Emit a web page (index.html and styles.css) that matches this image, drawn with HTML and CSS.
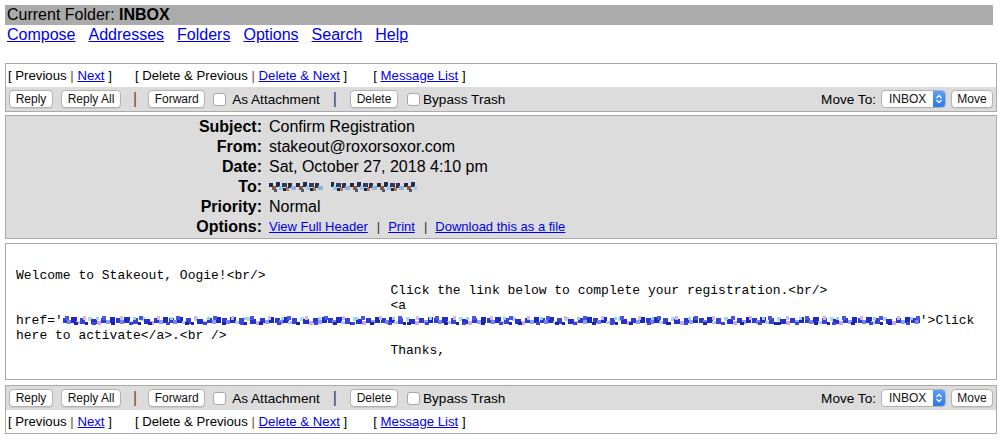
FILE: index.html
```html
<!DOCTYPE html>
<html>
<head>
<meta charset="utf-8">
<title>INBOX</title>
<link rel="stylesheet" href="styles.css">
</head>
<body>
<div class="page">
  <div class="folder-bar">Current Folder: <b>INBOX</b></div>
  <nav class="main-nav">
    <a href="#">Compose</a>
    <a href="#">Addresses</a>
    <a href="#">Folders</a>
    <a href="#">Options</a>
    <a href="#">Search</a>
    <a href="#">Help</a>
  </nav>

  <div class="box nav-box top-box">
    <div class="nav-row">
      <span class="grp">[ Previous <span class="pipe">|</span> <a href="#">Next</a> ]</span>
      <span class="grp grp-del">[ Delete &amp; Previous <span class="pipe">|</span> <a href="#">Delete &amp; Next</a> ]</span>
      <span class="grp grp-list">[ <a href="#">Message List</a> ]</span>
    </div>
    <div class="tool-row">
      <div class="tools-left">
        <button class="btn btn-reply">Reply</button>
        <button class="btn btn-replyall">Reply All</button>
        <span class="sep sep-a">|</span>
        <button class="btn btn-forward">Forward</button>
        <input type="checkbox" class="chk chk-attach">
        <span class="lbl">As Attachment</span>
        <span class="sep sep-b">|</span>
        <button class="btn btn-delete">Delete</button>
        <input type="checkbox" class="chk chk-bypass">
        <span class="lbl">Bypass Trash</span>
      </div>
      <div class="tools-right">
        <span class="lbl">Move To:</span>
        <span class="select"><span class="select-text">INBOX</span><span class="select-chip"><svg width="8" height="10" viewBox="0 0 8 10"><path d="M1.5 4 L4 1.5 L6.5 4 M1.5 6 L4 8.5 L6.5 6" fill="none" stroke="#fff" stroke-width="1.3"/></svg></span></span>
        <button class="btn btn-move">Move</button>
      </div>
    </div>
  </div>

  <div class="box header-box">
    <div class="hdr-label">Subject:</div><div class="hdr-value">Confirm Registration</div>
    <div class="hdr-label">From:</div><div class="hdr-value">stakeout@roxorsoxor.com</div>
    <div class="hdr-label">Date:</div><div class="hdr-value">Sat, October 27, 2018 4:10 pm</div>
    <div class="hdr-label">To:</div><div class="hdr-value"><svg class="redact-to" width="148" height="14" viewBox="0 0 148 14">
      <defs>
        <pattern id="pto" width="27" height="14" patternUnits="userSpaceOnUse">
          <rect x="0" y="3" width="4" height="4" fill="#2a2040"/>
          <rect x="3" y="6" width="4" height="4" fill="#8a5a40"/>
          <rect x="7" y="2" width="4" height="5" fill="#1e2d55"/>
          <rect x="10" y="6" width="4" height="4" fill="#9cc4e4"/>
          <rect x="13" y="3" width="5" height="4" fill="#2b3a66"/>
          <rect x="17" y="7" width="3" height="4" fill="#b07a50"/>
          <rect x="19" y="3" width="4" height="5" fill="#3a2a4a"/>
          <rect x="22" y="6" width="5" height="4" fill="#8ab4d8"/>
          <rect x="5" y="9" width="3" height="3" fill="#4a5a7a"/>
          <rect x="14" y="8" width="3" height="3" fill="#1a2448"/>
        </pattern>
      </defs>
      <rect x="0" y="0" width="54" height="14" fill="url(#pto)"/>
      <rect x="62" y="0" width="86" height="14" fill="url(#pto)"/>
    </svg></div>
    <div class="hdr-label">Priority:</div><div class="hdr-value">Normal</div>
    <div class="hdr-label">Options:</div><div class="hdr-value hdr-options"><a href="#">View Full Header</a><span class="opt-pipe">|</span><a href="#">Print</a><span class="opt-pipe">|</span><a href="#">Download this as a file</a></div>
  </div>

  <div class="box body-box">
<pre class="msg">Welcome to Stakeout, Oogie!&lt;br/&gt;
                                                Click the link below to complete your registration.&lt;br/&gt;
                                                &lt;a
href='<svg class="redact-href" width="857" height="15" viewBox="0 0 857 15">
      <defs>
        <pattern id="ph1" width="53" height="15" patternUnits="userSpaceOnUse">
          <rect x="0" y="5" width="5" height="5" fill="#2b3bd6"/>
          <rect x="4" y="7" width="4" height="4" fill="#7b7fe8"/>
          <rect x="8" y="4" width="6" height="6" fill="#1c2cc4"/>
          <rect x="13" y="8" width="4" height="3" fill="#b7c7f5"/>
          <rect x="17" y="5" width="5" height="6" fill="#3a44d4"/>
          <rect x="22" y="9" width="3" height="3" fill="#1e22b0"/>
          <rect x="25" y="4" width="4" height="4" fill="#a9d8f2"/>
          <rect x="28" y="6" width="6" height="5" fill="#2430c8"/>
          <rect x="34" y="8" width="4" height="4" fill="#c8a8e6"/>
          <rect x="38" y="5" width="5" height="5" fill="#2a38d8"/>
          <rect x="43" y="7" width="4" height="4" fill="#8fa0ee"/>
          <rect x="47" y="4" width="5" height="6" fill="#1a28bc"/>
        </pattern>
        <pattern id="ph2" width="37" height="15" patternUnits="userSpaceOnUse">
          <rect x="2" y="3" width="4" height="4" fill="#4a56e0"/>
          <rect x="11" y="9" width="4" height="3" fill="#2020a8"/>
          <rect x="20" y="3" width="3" height="4" fill="#d0b8ec"/>
          <rect x="29" y="9" width="4" height="3" fill="#3b48d8"/>
          <rect x="33" y="4" width="3" height="3" fill="#9ad0f0"/>
        </pattern>
      </defs>
      <rect x="0" y="0" width="857" height="15" fill="url(#ph1)"/>
      <rect x="0" y="0" width="857" height="15" fill="url(#ph2)"/>
    </svg>'&gt;Click
here to activate&lt;/a&gt;.&lt;br /&gt;
                                                Thanks,</pre>
  </div>

  <div class="box nav-box bottom-box">
    <div class="tool-row">
      <div class="tools-left">
        <button class="btn btn-reply">Reply</button>
        <button class="btn btn-replyall">Reply All</button>
        <span class="sep sep-a">|</span>
        <button class="btn btn-forward">Forward</button>
        <input type="checkbox" class="chk chk-attach">
        <span class="lbl">As Attachment</span>
        <span class="sep sep-b">|</span>
        <button class="btn btn-delete">Delete</button>
        <input type="checkbox" class="chk chk-bypass">
        <span class="lbl">Bypass Trash</span>
      </div>
      <div class="tools-right">
        <span class="lbl">Move To:</span>
        <span class="select"><span class="select-text">INBOX</span><span class="select-chip"><svg width="8" height="10" viewBox="0 0 8 10"><path d="M1.5 4 L4 1.5 L6.5 4 M1.5 6 L4 8.5 L6.5 6" fill="none" stroke="#fff" stroke-width="1.3"/></svg></span></span>
        <button class="btn btn-move">Move</button>
      </div>
    </div>
    <div class="nav-row">
      <span class="grp">[ Previous <span class="pipe">|</span> <a href="#">Next</a> ]</span>
      <span class="grp grp-del">[ Delete &amp; Previous <span class="pipe">|</span> <a href="#">Delete &amp; Next</a> ]</span>
      <span class="grp grp-list">[ <a href="#">Message List</a> ]</span>
    </div>
  </div>
</div>
</body>
</html>
```

FILE: styles.css
```css
* { box-sizing: border-box; }

html, body {
  margin: 0;
  padding: 0;
  background: #ffffff;
}

body {
  font-family: "Liberation Sans", Arial, sans-serif;
  color: #000;
}

a { color: #0000ee; text-decoration: underline; }

.page {
  padding: 5px 0 0 5px;
  width: 1005px;
}

.folder-bar {
  width: 988px;
  height: 20px;
  line-height: 20px;
  background: #ababab;
  font-size: 16px;
  padding-left: 2px;
}

.main-nav {
  display: flex;
  gap: 13px;
  height: 20px;
  line-height: 20px;
  font-size: 16px;
  padding-left: 2px;
  margin-bottom: 18px;
}

.box {
  width: 992px;
  border: 1px solid #aaaaaa;
}

.nav-row {
  height: 23px;
  line-height: 23px;
  font-size: 13.2px;
  padding-left: 2px;
  background: #fff;
  display: flex;
  white-space: pre;
}

.grp-del { margin-left: 23px; }
.grp-list { margin-left: 26px; }

.pipe { color: #7a4a30; }

.tool-row {
  height: 24px;
  background: #dcdcdc;
  display: flex;
  align-items: center;
  justify-content: space-between;
  padding: 0 3px 0 3px;
  font-size: 13.6px;
}

.tools-left, .tools-right {
  display: flex;
  align-items: center;
}

.btn {
  font-family: "Liberation Sans", Arial, sans-serif;
  font-size: 12px;
  color: #111;
  height: 18px;
  line-height: 16px;
  padding: 0;
  text-align: center;
  white-space: nowrap;
  background: #fff;
  border: 1px solid #b3b3b3;
  border-radius: 4px;
  box-shadow: 0 1px 0 rgba(0,0,0,0.08);
  margin: 0;
}

.btn-reply { width: 44px; }
.btn-replyall { width: 60px; margin-left: 8px; }
.btn-forward { width: 57px; }
.btn-delete { width: 48px; }
.btn-move { width: 42px; margin-left: 5px; }

.sep { font-size: 16px; line-height: 18px; }
.sep-a { margin: 0 11px 0 12px; color: #8a3c10; }
.sep-b { margin: 0 13px 0 13px; color: #2a3c78; }

.chk {
  appearance: none;
  -webkit-appearance: none;
  width: 13px;
  height: 13px;
  margin: 0;
  border: 1px solid #a8a8a8;
  border-radius: 3px;
  background: #fff;
}

.chk-attach { margin: 0 6px 0 8px; }
.chk-bypass { margin: 0 3px 0 9px; }

.lbl { white-space: nowrap; }

.tools-right .lbl { margin-right: 5px; }

.select {
  display: inline-flex;
  align-items: stretch;
  width: 65px;
  height: 18px;
  border: 1px solid #b3b3b3;
  border-radius: 4px;
  background: #fff;
  overflow: hidden;
  font-size: 12px;
}

.select-text {
  flex: 1;
  line-height: 16px;
  padding-left: 7px;
  color: #111;
}

.select-chip {
  width: 12px;
  background: linear-gradient(#5aa0f8, #2a78ee);
  display: flex;
  align-items: center;
  justify-content: center;
}

.top-box { margin-top: 0; }

.header-box {
  margin-top: 3px;
  background: #dcdcdc;
  display: grid;
  grid-template-columns: 256px 1fr;
  grid-auto-rows: 20px;
  padding: 1px 0 1px 0;
  font-size: 16px;
  line-height: 20px;
}

.hdr-label {
  font-weight: bold;
  text-align: right;
}

.hdr-value {
  padding-left: 7px;
  display: flex;
  align-items: center;
}

.hdr-options {
  font-size: 13px;
}

.opt-pipe {
  color: #333;
  margin: 0 8px 0 9px;
}

.redact-to { display: block; }

.body-box {
  margin-top: 4px;
  padding: 24px 10px 21px 10px;
  background: #fff;
}

.msg {
  margin: 0;
  font-family: "Liberation Mono", "Courier New", monospace;
  font-size: 13px;
  line-height: 15px;
  white-space: pre;
}

.redact-href {
  display: inline-block;
  vertical-align: top;
}

.bottom-box { margin-top: 5px; }
```
